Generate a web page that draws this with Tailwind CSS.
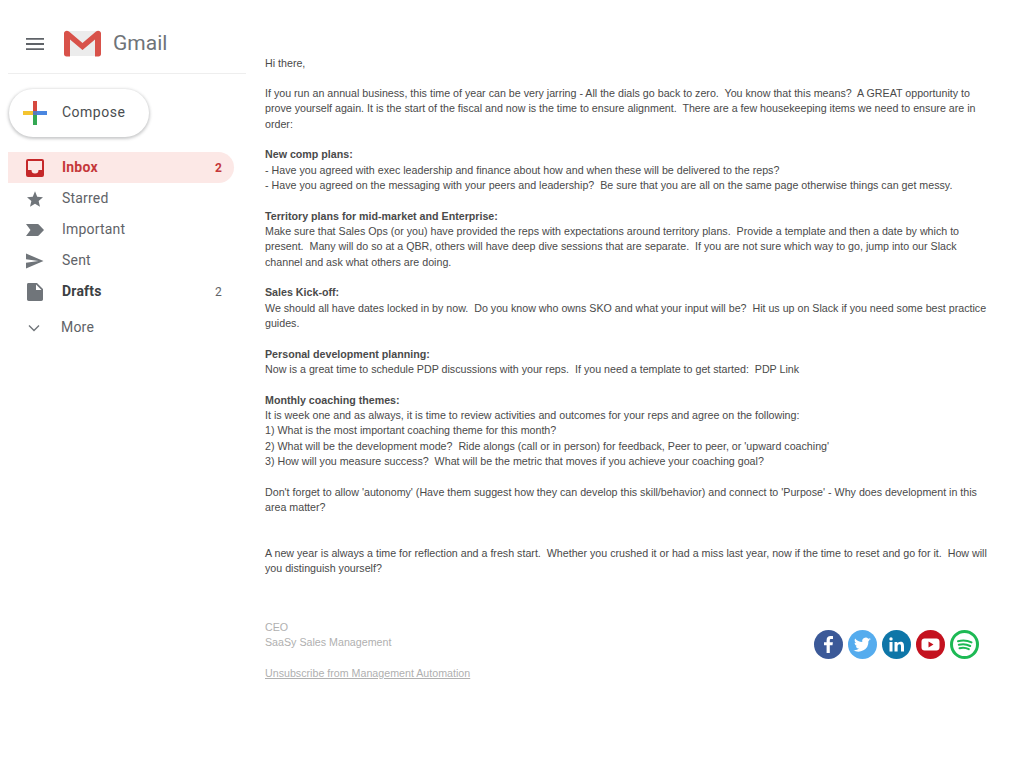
<!DOCTYPE html>
<html lang="en">
<head>
  <meta charset="UTF-8" />
  <meta name="viewport" content="width=device-width, initial-scale=1.0"/>
  <title>Gmail</title>
  <script src="https://cdn.jsdelivr.net/npm/@tailwindcss/browser@4"></script>
</head>
<body class="bg-white font-['Roboto',sans-serif]">
<div class="flex w-[1024px] h-[757px] overflow-hidden">

  <!-- Sidebar -->
  <aside class="w-[246px] shrink-0 pl-2">
    <header class="h-[74px] border-b border-[#eeeeee] flex items-center pl-[18px] pt-[14px]">
      <svg class="w-[18px] h-[14px]" viewBox="0 0 18 14"><path d="M0 1h18v1.800H0zM0 6.100h18v1.800H0zM0 11.200h18V13H0z" fill="#5f6368"/></svg>
      <svg class="w-[37px] h-[27px] ml-[20px]" viewBox="0 0 37 27">
        <path d="M3 1h31v25H3z" fill="#ececec"/>
        <path d="M0 3.500C0 1 3 0 5 1.500L18.500 13 32 1.500C34 0 37 1 37 3.500V24c0 1.500-1 2.500-2.500 2.500H31V9.500L18.500 20 6 9.500v17H2.500C1 26.500 0 25.500 0 24z" fill="#d8524a"/>
      </svg>
      <span class="ml-[12px] text-[21px] text-[#6f7378] leading-none">Gmail</span>
    </header>

    <button class="mt-[15px] ml-[1px] w-[140px] h-[48px] rounded-full bg-white shadow-[0_1px_3px_1px_rgba(60,64,67,0.28)] flex items-center pl-[14px]">
      <svg class="w-[24px] h-[24px]" viewBox="0 0 24 24">
        <path d="M10 0h4v10h-4z" fill="#d6493f"/>
        <path d="M14 10h10v4H14z" fill="#4a86e0"/>
        <path d="M10 14h4v10h-4z" fill="#34a853"/>
        <path d="M0 10h10v4H0z" fill="#f4c430"/>
        <path d="M10 10h4v4h-4z" fill="#5a78b8"/>
      </svg>
      <span class="ml-[15px] mb-[1px] text-[14px] tracking-[0.5px] text-[#4a4d50]">Compose</span>
    </button>

    <nav class="mt-[15px] text-[14px] tracking-[0.2px] text-[#5f6368]">
      <div class="w-[226px] h-[31px] rounded-r-full bg-[#fce8e6] flex items-center text-[#c5383a] font-bold">
        <svg class="w-[18px] h-[18px] ml-[18px]" viewBox="0 0 18 18"><path fill-rule="evenodd" d="M2 0h14a2 2 0 0 1 2 2v14a2 2 0 0 1-2 2H2a2 2 0 0 1-2-2V2a2 2 0 0 1 2-2zm0 2v9h3.500a3.500 3.500 0 0 0 7 0H16V2z" fill="#c5282a"/></svg>
        <span class="ml-[18px]">Inbox</span>
        <span class="ml-auto mr-[12px] text-[12px]">2</span>
      </div>
      <div class="h-[31px] flex items-center">
        <svg class="w-[16px] h-[16px] ml-[19px]" viewBox="0 0 18 18"><path d="M9 14.300l5.600 3.400-1.500-6.400L18 7l-6.500-.6L9 .4 6.500 6.400 0 7l4.900 4.300-1.500 6.400z" fill="#70757a"/></svg>
        <span class="ml-[19px]">Starred</span>
      </div>
      <div class="h-[31px] flex items-center">
        <svg class="w-[18px] h-[18px] ml-[18px]" viewBox="0 0 18 18"><path d="M0 3h11.500c.7 0 1.300.3 1.700.9L18 9l-4.800 5.100c-.4.600-1 .9-1.700.9H0l4.500-6z" fill="#70757a"/></svg>
        <span class="ml-[18px]">Important</span>
      </div>
      <div class="h-[31px] flex items-center">
        <svg class="w-[18px] h-[18px] ml-[18px]" viewBox="0 0 18 18"><path d="M0 16.500L17.500 9 0 1.500v5.800L12.500 9 0 10.700z" fill="#70757a"/></svg>
        <span class="ml-[18px]">Sent</span>
      </div>
      <div class="h-[31px] flex items-center">
        <svg class="w-[16px] h-[18px] ml-[19px]" viewBox="1 0 16 18"><path d="M2.500 0C1.500 0 1 .7 1 1.700v14.600C1 17.300 1.800 18 2.700 18h12.600c1 0 1.700-.7 1.700-1.700V6l-6-6zm7.500 7V1.500L15.500 7z" fill="#70757a"/></svg>
        <span class="ml-[19px] font-bold text-[#3c4043]">Drafts</span>
        <span class="ml-auto mr-[24px] text-[12px]">2</span>
      </div>
      <div class="h-[31px] mt-[5px] flex items-center">
        <svg class="w-[12px] h-[8px] ml-[20px]" viewBox="0 0 12 8"><path d="M1 1.500l5 5 5-5" fill="none" stroke="#70757a" stroke-width="1.400"/></svg>
        <span class="ml-[21px]">More</span>
      </div>
    </nav>
  </aside>

  <!-- Email body -->
  <main class="pl-[19px] pt-[55.5px] w-[778px] font-['Liberation_Sans',Arial,sans-serif] text-[10.68px] leading-[15.33px] text-[#4a4a4a]">
    <p>Hi there,</p>
    <p class="mt-[15.33px] whitespace-pre">If you run an annual business, this time of year can be very jarring - All the dials go back to zero.  You know that this means?  A GREAT opportunity to<br>prove yourself again. It is the start of the fiscal and now is the time to ensure alignment.  There are a few housekeeping items we need to ensure are in<br>order:</p>
    <p class="mt-[15.33px] whitespace-pre"><b>New comp plans:</b><br>- Have you agreed with exec leadership and finance about how and when these will be delivered to the reps?<br>- Have you agreed on the messaging with your peers and leadership?  Be sure that you are all on the same page otherwise things can get messy.</p>
    <p class="mt-[15.33px] whitespace-pre"><b>Territory plans for mid-market and Enterprise:</b><br>Make sure that Sales Ops (or you) have provided the reps with expectations around territory plans.  Provide a template and then a date by which to<br>present.  Many will do so at a QBR, others will have deep dive sessions that are separate.  If you are not sure which way to go, jump into our Slack<br>channel and ask what others are doing.</p>
    <p class="mt-[15.33px] whitespace-pre"><b>Sales Kick-off:</b><br>We should all have dates locked in by now.  Do you know who owns SKO and what your input will be?  Hit us up on Slack if you need some best practice<br>guides.</p>
    <p class="mt-[15.33px] whitespace-pre"><b>Personal development planning:</b><br>Now is a great time to schedule PDP discussions with your reps.  If you need a template to get started:  PDP Link</p>
    <p class="mt-[15.33px] whitespace-pre"><b>Monthly coaching themes:</b><br>It is week one and as always, it is time to review activities and outcomes for your reps and agree on the following:<br>1) What is the most important coaching theme for this month?<br>2) What will be the development mode?  Ride alongs (call or in person) for feedback, Peer to peer, or 'upward coaching'<br>3) How will you measure success?  What will be the metric that moves if you achieve your coaching goal?</p>
    <p class="mt-[15.33px] whitespace-pre">Don't forget to allow 'autonomy' (Have them suggest how they can develop this skill/behavior) and connect to 'Purpose' - Why does development in this<br>area matter?</p>
    <p class="mt-[30.66px] whitespace-pre">A new year is always a time for reflection and a fresh start.  Whether you crushed it or had a miss last year, now if the time to reset and go for it.  How will<br>you distinguish yourself?</p>

    <!-- Signature -->
    <div class="mt-[43px] flex justify-between items-start text-[#b0b0b0]">
      <div>
        <p>CEO<br>SaaSy Sales Management</p>
        <a href="#" class="block mt-[15.33px] underline">Unsubscribe from Management Automation</a>
      </div>
      <div class="flex gap-[5px] mt-[10px] mr-[45px]">
        <svg class="w-[29px] h-[29px]" viewBox="0 0 29 29"><circle cx="14.500" cy="14.500" r="14.500" fill="#3b5998"/><path d="M15.800 23v-7.700h2.700l.4-3h-3.100v-1.900c0-.9.300-1.400 1.500-1.400H19V6.200c-.3 0-1.300-.1-2.400-.1-2.400 0-4 1.400-4 4.100v2.100H10v3h2.600V23z" fill="#fff"/></svg>
        <svg class="w-[29px] h-[29px]" viewBox="0 0 29 29"><circle cx="14.500" cy="14.500" r="14.500" fill="#55acee"/><path d="M23 9.300c-.6.300-1.300.5-2 .6.700-.4 1.300-1.100 1.500-1.900-.7.400-1.400.7-2.200.8a3.500 3.500 0 0 0-6 3.200c-2.900-.1-5.500-1.500-7.200-3.600-.9 1.600-.5 3.600 1.100 4.700-.6 0-1.100-.2-1.600-.4 0 1.700 1.200 3.100 2.800 3.400-.5.100-1 .2-1.600.1.400 1.400 1.700 2.400 3.300 2.400A7 7 0 0 1 5 20.100a10 10 0 0 0 15.400-8.900c.7-.5 1.200-1.100 1.600-1.900z" fill="#fff"/></svg>
        <svg class="w-[29px] h-[29px]" viewBox="0 0 29 29"><circle cx="14.500" cy="14.500" r="14.500" fill="#0e76a8"/><path d="M7.500 12h3v9.500h-3zM9 7.200a1.700 1.700 0 1 1 0 3.400 1.700 1.700 0 0 1 0-3.400zM12.500 12h2.900v1.300c.5-.8 1.500-1.600 3-1.600 3 0 3.600 2 3.600 4.500v5.300h-3v-4.700c0-1.100 0-2.500-1.500-2.500s-1.900 1.200-1.900 2.400v4.800h-3.100z" fill="#fff"/></svg>
        <svg class="w-[29px] h-[29px]" viewBox="0 0 29 29"><circle cx="14.500" cy="14.500" r="14.500" fill="#c4121f"/><path fill-rule="evenodd" d="M8.500 8.500h12c1.700 0 3 1.300 3 3v6c0 1.700-1.300 3-3 3h-12c-1.700 0-3-1.300-3-3v-6c0-1.700 1.300-3 3-3zM12.500 11.500v6l5-3z" fill="#fff"/></svg>
        <svg class="w-[29px] h-[29px]" viewBox="0 0 29 29"><circle cx="14.500" cy="14.500" r="13" fill="#fff" stroke="#1db954" stroke-width="3"/><path d="M8 11.200c4.500-1.200 9.500-.8 13.500 1.200M8.800 14.800c3.800-1 8-.6 11.400 1.200M9.500 18.200c3-.8 6.500-.5 9.300 1" fill="none" stroke="#1db954" stroke-width="2" stroke-linecap="round"/></svg>
      </div>
    </div>
  </main>
</div>
</body>
</html>
